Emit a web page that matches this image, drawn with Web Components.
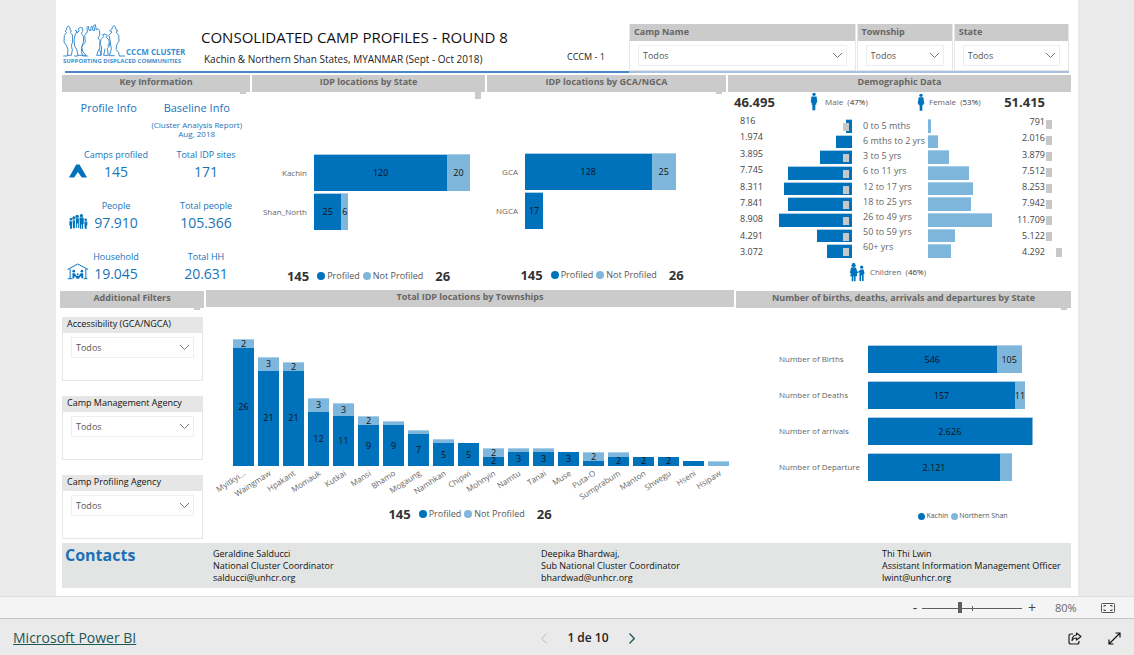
<!DOCTYPE html>
<html lang="en">
<head>
<meta charset="utf-8">
<title>Consolidated Camp Profiles</title>
<style>
  html, body { margin: 0; min-height: 100%; }
  body {
    font-family: "Open Sans", "Noto Sans", sans-serif;
    font-size: 10px; line-height: 12px; color: #222; background: #eaeaea;
    --dark: #0072bc; --light: #7fb6dc; --edge: #a9cfe8; --head: #cbcbcb; --ink: #666;
  }
</style>
</head>
<body>
<report-app></report-app>

<script>
const define = (name, html, setup) => {
  const tpl = document.createElement('template');
  tpl.innerHTML = html;
  customElements.define(name, class extends HTMLElement {
    constructor() {
      super();
      this.attachShadow({ mode: 'open' });
    }
    connectedCallback() {
      if (this.shadowRoot.childNodes.length) return;
      this.shadowRoot.append(tpl.content.cloneNode(true));
      if (setup) setup(this, this.shadowRoot);
    }
  });
};

/* Cluster logo: outlined group of people above the wordmark */
define('cluster-logo', `
<style>
  :host { display: block; color: #3d8fd1; font-weight: 600; white-space: nowrap; }
  .top { display: flex; align-items: flex-end; gap: 1px; }
  svg { width: 62px; height: 33px; display: block; }
  b { font-size: 8px; line-height: 10px; font-weight: 700; }
  p { margin: 0; font-size: 6px; line-height: 9px; font-weight: 700; }
</style>
<div class="top">
  <svg viewBox="21 74 186 99" fill="none" stroke="currentColor" stroke-width="3" stroke-linejoin="round" aria-hidden="true">
    <path d="M22 170H34L36 150L31 138L24 128L25 108L32 99L27 95L31 92Q32 80 37 80Q42 80 43 92L47 95L42 99L49 106L50 128L46 138L49 152L46 168H34"/>
    <path d="M54 170H66L63 152L56 140L54 122L58 104L63 98L57 92L62 95L64 101L69 94L67 88L73 84L80 86L80 96L76 102L83 112L82 130L77 144L81 158L90 168H66"/>
    <path d="M97 170H80L76 156L78 140L88 128L86 108L94 98L93 84L97 80L99 93L105 93L104 84L108 80L110 93L116 93L113 78L118 76L121 92L126 88L131 94L131 108L126 116L132 124L131 150L135 168H122L128 150"/>
    <path d="M135 168L137 142L132 134L135 120L143 112L140 106L147 104L154 108L151 114L159 122L160 140L154 148L157 168H143L147 148"/>
    <path d="M155 140L163 128L159 108L168 98L161 94L167 91Q169 79 174 79Q179 79 180 91L186 94L180 98L188 108L189 126L183 134L180 150L188 160L190 170H207M163 128L166 150L160 169H176"/>
  </svg><b>CCCM CLUSTER</b>
</div>
<p>SUPPORTING DISPLACED COMMUNITIES</p>`);

/* Titled drop-down filter */
define('slicer-box', `
<style>
  :host { display: flex; flex-direction: column; box-sizing: border-box; border: 1px solid #e6e6e6; border-top: 0; background: #fff; }
  label { background: var(--head); color: var(--ink); font-size: 9px; font-weight: 700; line-height: 16px; padding: 0 4px 1px; white-space: nowrap; }
  :host([plain]) label { background: #e6e6e6; color: #111; font-weight: 400; line-height: 14px; padding-bottom: 2px; }
  .box { display: grid; margin: 4px 8px; border: 1px solid #eee; align-items: center; }
  select, svg { grid-area: 1 / 1; }
  select { appearance: none; border: 0; background: none; margin: 0; padding: 0 4px; width: 100%; height: 19px; font: inherit; font-size: 9px; color: #555; }
  svg { justify-self: end; margin-right: 3px; pointer-events: none; width: 11px; height: 7px; }
</style>
<label for="s"></label>
<div class="box"><select id="s"><option>Todos</option></select>
<svg viewBox="0 0 11 7" fill="none" stroke="#777"><path d="M1 1L5.500 5.500L10 1"/></svg></div>`,
(el, root) => { root.querySelector('label').textContent = el.getAttribute('label'); });

define('report-header', `
<style>
  :host { display: grid; grid-template-columns: 138px minmax(0, 301fr) 64px minmax(0, 504fr); height: 47px; }
  :host { grid-template-columns: 138px minmax(0, 365fr) 64px minmax(0, 440fr) 2px; }
  .cell { border-bottom: 2px solid #4a86cb; min-width: 0; }
  .logo { margin-left: 3px; }
  cluster-logo { margin-left: -2px; }
  h1 { font-size: 15px; line-height: 20px; font-weight: 400; color: #111; margin: 3px 0 0 1px; white-space: nowrap; }
  h2 { font-size: 10px; line-height: 16px; font-weight: 400; color: #222; margin: 4px 0 0 4px; white-space: nowrap; }
  .code { padding: 26px 0 0 2px; box-sizing: border-box; font-size: 9px; color: #222; line-height: 14px; }
  .slicers { display: grid; grid-template-columns: 226fr 96fr 115fr; gap: 1px; border-bottom: 2px solid #a8c0e2; }
</style>
<div class="cell logo"><cluster-logo></cluster-logo></div>
<div class="cell"><h1>CONSOLIDATED CAMP PROFILES - ROUND 8</h1><h2>Kachin &amp; Northern Shan States, MYANMAR (Sept - Oct 2018)</h2></div>
<div class="cell code">CCCM - 1</div>
<div class="slicers">
  <slicer-box label="Camp Name"></slicer-box><slicer-box label="Township"></slicer-box><slicer-box label="State"></slicer-box>
</div>`);

/* Section with a grey title strip */
define('panel-card', `
<style>
  :host { display: flex; flex-direction: column; min-width: 0; }
  header { position: relative; background: var(--head); text-align: center; height: 17px; }
  h3 { margin: 0; font-size: 9px; line-height: 14px; font-weight: 700; color: #666; white-space: nowrap; }
  i { position: absolute; right: 4px; top: 100%; width: 6px; height: 2px; background: var(--head); }
  :host([mark=tall]) i { height: 7px; }
  :host(:not([mark])) i { display: none; }
</style>
<header><h3></h3><i></i></header><slot></slot>`,
(el, root) => { root.querySelector('h3').textContent = el.getAttribute('heading'); });

const ICONS = {
  tent: ['43 208 55 42', 18, 14, '<path d="M65 209H75L98 249H82L70 232L59 249H43Z"/>'],
  people: ['39 359 58 46', 19, 15, '<circle cx="45" cy="375" r="4"/><circle cx="54" cy="371" r="5"/><circle cx="64" cy="366" r="5"/><circle cx="77" cy="364" r="5"/><circle cx="90" cy="377" r="4"/><path d="M40 381H48V404H42V394H40ZM50 378H57V403H51ZM60 372H69V402H66V388H63V402H60ZM71 370H84V390H82V404H78V391H76V404H72ZM86 382H95V394H93V404H87Z"/>'],
  house: ['36 493 66 52', 22, 17, '<path d="M37 513L68 496L100 513M45 511V541M93 511V541M38 541H52M86 541H98" fill="none" stroke="currentColor" stroke-width="3"/><circle cx="56" cy="518" r="4"/><circle cx="68" cy="527" r="3"/><circle cx="81" cy="518" r="4"/><path d="M52 524H59L64 532H72L77 524H85V540H79V532L73 538V541H64V538L58 532V540H52Z"/>'],
  man: ['255 66 24 58', 8, 19, '<circle cx="267" cy="73" r="5"/><path d="M259 80H275L277 98H274V105H271V122H262V105H260V98H257Z"/>'],
  woman: ['578 64 24 54', 8, 18, '<circle cx="590" cy="71" r="5"/><path d="M583 77H597L600 96H597V101H594V117H586V101H583V96H580Z"/>'],
  children: ['370 575 52 62', 17, 20, '<path d="M378 585Q378 577 384 577Q390 577 390 585L393 588H388V591H380V588H375ZM376 592H391L396 606L405 600L404 598H415L418 612H415V634H410V617H407V634H402V606L394 611L395 619H390V635H385V619H383V635H378V619H373L376 610H372Z"/><circle cx="409" cy="591" r="5"/>']
};
define('glyph-icon', `<style>:host { display: block; color: var(--dark); line-height: 0; }</style><svg fill="currentColor" aria-hidden="true"></svg>`,
(el, root) => {
  const [box, w, h, shape] = ICONS[el.getAttribute('name')];
  const svg = root.querySelector('svg');
  svg.setAttribute('viewBox', box);
  svg.setAttribute('width', w);
  svg.setAttribute('height', h);
  svg.innerHTML = shape;
});

define('key-information', `
<style>
  :host { display: block; color: #1a73b9; white-space: nowrap; text-align: center; padding-top: 8px; }
  .heads { display: grid; grid-template-columns: 1fr 1fr; margin: 0 8px 0 4px; }
  h4 { margin: 0; font-size: 11px; line-height: 16px; font-weight: 400; }
  small { display: block; font-size: 8px; line-height: 9px; padding-top: 4px; }
  .stats { display: grid; grid-template-columns: 32px 44px minmax(0, 1fr); row-gap: 17px; padding-top: 10px; }
  .stats glyph-icon { align-self: end; justify-self: center; margin-bottom: 4px; }
  dl { margin: 0; display: flex; flex-direction: column; align-items: center; }
  dl.total { margin-left: 24px; }
  dt { font-size: 9px; line-height: 14px; }
  dd { margin: 0; font-size: 14px; line-height: 20px; }
</style>
<div class="heads"><h4>Profile Info</h4><div><h4>Baseline Info</h4><small>(Cluster Analysis Report)<br>Aug, 2018</small></div></div>
<div class="stats"></div>`,
(el, root) => {
  const rows = [
    ['tent', 'Camps profiled', '145', 'Total IDP sites', '171'],
    ['people', 'People', '97.910', 'Total people', '105.366'],
    ['house', 'Household', '19.045', 'Total HH', '20.631']
  ];
  root.querySelector('.stats').innerHTML = rows.map(([i, a, b, c, d]) =>
    `<glyph-icon name="${i}"></glyph-icon><dl><dt>${a}</dt><dd>${b}</dd></dl><dl class="total"><dt>${c}</dt><dd>${d}</dd></dl>`).join('');
});

/* Colour legend, optionally with totals on both sides */
define('chart-legend', `
<style>
  :host { display: flex; align-items: center; justify-content: center; font-size: 9px; line-height: 16px; color: #555; white-space: nowrap; }
  b { font-size: 13px; color: #333; }
  .before { margin-right: 8px; }
  .after { margin-left: 12px; }
  span { display: flex; align-items: center; gap: 2px; margin-right: 3px; }
  span:last-of-type { margin-right: 0; }
  i { width: 8px; height: 8px; border-radius: 50%; background: var(--dark); }
  span + span i { background: var(--light); }
  :host([small]) { font-size: 7px; }
  :host([small]) i { width: 7px; height: 7px; }
  :host([small]) span { gap: 1px; }
</style>`,
(el, root) => {
  const [a, b] = el.getAttribute('names').split('|');
  const t = (el.getAttribute('totals') || '').split('|');
  root.innerHTML += (t[0] ? `<b class="before">${t[0]}</b>` : '') + `<span><i></i>${a}</span><span><i></i>${b}</span>` + (t[1] ? `<b class="after">${t[1]}</b>` : '');
});

/* Stacked horizontal bars. Each row: label, first value, its width %, second value, its width % */
define('bar-chart', `
<style>
  :host { display: grid; grid-template-columns: var(--label) minmax(0, 1fr); row-gap: var(--gap); grid-auto-rows: var(--bar); align-items: stretch; color: var(--ink); font-size: 8px; }
  .label { display: flex; align-items: center; justify-content: var(--side, flex-end); padding-right: 7px; white-space: nowrap; }
  .bar { display: flex; }
  .bar span { box-sizing: border-box; border-top: 1px solid var(--edge); display: flex; align-items: center; justify-content: center; background: var(--light); color: #111; font-size: 9px; }
  .bar span:first-child { background: var(--dark); }
</style>`,
(el, root) => {
  root.innerHTML += el.getAttribute('rows').split(';').map(r => {
    const [label, a, wa, b, wb] = r.split(',');
    return `<div class="label">${label}</div><div class="bar"><span style="width:${wa}%">${a}</span><span style="width:${wb}%">${b}</span></div>`;
  }).join('');
});

define('population-pyramid', `
<style>
  :host { display: flex; flex-direction: column; color: var(--ink); white-space: nowrap; }
  .top { display: grid; grid-template-columns: 76px 107px minmax(0, 1fr) auto; align-items: center; height: 17px; padding: 0 26px 0 6px; }
  .top b { font-size: 13px; color: #333; }
  .who, .kids { display: flex; align-items: center; gap: 7px; font-size: 8px; }
  .who.near { gap: 4px; }
  em { font-style: normal; color: #333; }
  .plot { display: grid; grid-template-columns: 34px minmax(0, 90fr) 76px minmax(0, 80fr) 37px 26px; height: 149px; }
  ol { box-sizing: border-box; list-style: none; margin: 0; padding: 0; display: flex; flex-direction: column; justify-content: space-between; }
  .num { font-size: 9px; line-height: 12px; color: #444; }
  .left { padding: 6px 0 0 12px; }
  .right { padding: 7px 0 0; text-align: right; }
  .age { padding: 11px 0 5px 11px; font-size: 9px; line-height: 12px; }
  .bars { display: grid; grid-template-columns: minmax(0, 1fr); grid-auto-rows: minmax(0, 1fr); row-gap: 2px; padding-top: 10px; justify-content: stretch; }
  .bars li { position: relative; box-sizing: border-box; border-top: 1px solid var(--edge); }
  .male li { justify-self: end; background: var(--dark); }
  .female li { background: var(--light); }
  .male i { position: absolute; right: 3px; top: 3px; width: 6px; height: 8px; background: #c8c8c8; }
  .marks { padding: 11px 0 1px 1px; }
  .marks li { width: 6px; height: 9px; background: #c8c8c8; }
  .marks li:last-child { align-self: center; }
  .kids { justify-content: center; height: 28px; gap: 4px; padding-right: 24px; }
</style>
<div class="top"><b>46.495</b><span class="who"><glyph-icon name="man"></glyph-icon><span>Male &nbsp;(<em>47%</em>)</span></span>
<span class="who near"><glyph-icon name="woman"></glyph-icon><span>Female &nbsp;(<em>53%</em>)</span></span><b>51.415</b></div>
<div class="plot">
  <ol class="num left"></ol><ol class="bars male"></ol><ol class="age"></ol><ol class="bars female"></ol><ol class="num right"></ol><ol class="marks"></ol>
</div>
<div class="kids"><glyph-icon name="children"></glyph-icon><span>Children &nbsp;(<em>46%</em>)</span></div>`,
(el, root) => {
  const rows = [
    ['816', 7, '0 to 5 mths', 4, '791'], ['1.974', 18, '6 mths to 2 yrs', 13, '2.016'],
    ['3.895', 36, '3 to 5 yrs', 26, '3.879'], ['7.745', 71, '6 to 11 yrs', 51, '7.512'],
    ['8.311', 76, '12 to 17 yrs', 56, '8.253'], ['7.841', 71, '18 to 25 yrs', 54, '7.942'],
    ['8.908', 81, '26 to 49 yrs', 80, '11.709'], ['4.291', 39, '50 to 59 yrs', 34, '5.122'],
    ['3.072', 28, '60+ yrs', 29, '4.292']
  ];
  const fill = (sel, fn) => { root.querySelector(sel).innerHTML = rows.map(fn).join(''); };
  fill('.left', r => `<li>${r[0]}</li>`);
  fill('.male', (r, i) => `<li style="width:${r[1]}%">${i === 1 ? '' : '<i></i>'}</li>`);
  fill('.age', r => `<li>${r[2]}</li>`);
  fill('.female', r => `<li style="width:${r[3]}%"></li>`);
  fill('.right', r => `<li>${r[4]}</li>`);
  fill('.marks', () => '<li></li>');
});

define('township-chart', `
<style>
  :host { display: grid; grid-template-columns: repeat(20, minmax(0, 1fr)); column-gap: 4px; }
  .col { height: 127px; display: flex; flex-direction: column; justify-content: flex-end; font-size: 9px; line-height: 8px; color: #111; }
  .col span { box-sizing: border-box; display: flex; align-items: center; justify-content: center; background: var(--dark); flex: none; }
  .col span:first-child { background: var(--light); border-top: 1px solid var(--edge); }
  .name { display: flex; justify-content: flex-end; padding-top: 2px; height: 30px; font-size: 8px; line-height: 10px; color: var(--ink); white-space: nowrap; }
  .name span { transform: rotate(-33deg); transform-origin: 100% 0; margin-right: 12px; height: 10px; }
</style>`,
(el, root) => {
  const data = [['Myitkyi...', 26, 2], ['Waingmaw', 21, 3], ['Hpakant', 21, 2], ['Momauk', 12, 3], ['Kutkai', 11, 3],
    ['Mansi', 9, 2], ['Bhamo', 9, 1], ['Mogaung', 7, 1], ['Namhkan', 5, 1], ['Chipwi', 5, 0], ['Mohnyin', 2, 2],
    ['Namtu', 3, 1], ['Tanai', 3, 1], ['Muse', 3, 0], ['Puta-O', 1, 2], ['Sumprabum', 2, 1], ['Manton', 2, 0],
    ['Shwegu', 2, 0], ['Hseni', 1, 0], ['Hsipaw', 0, 1]];
  const part = n => n ? `height:${n / 28 * 100}%` : 'height:0;border:0';
  const text = n => n > 1 ? n : '';
  root.innerHTML += data.map(([, a, b]) => `<div class="col"><span style="${part(b)}">${text(b)}</span><span style="${part(a)}">${text(a)}</span></div>`).join('')
    + data.map(([n]) => `<div class="name"><span>${n}</span></div>`).join('');
});

define('contacts-band', `
<style>
  :host { display: grid; grid-template-columns: 148px 328fr 341fr 186fr; background: #e3e5e4; height: 45px; color: #111; padding: 0 3px; font-size: 9px; line-height: 12px; }
  h3 { margin: 0; font-size: 16px; line-height: 24px; color: #1a6fb8; font-weight: 700; }
  address { font-style: normal; padding-top: 5px; white-space: nowrap; }
</style>
<h3>Contacts</h3>
<address>Geraldine Salducci<br>National Cluster Coordinator<br>salducci@unhcr.org</address>
<address>Deepika Bhardwaj,<br>Sub National Cluster Coordinator<br>bhardwad@unhcr.org</address>
<address>Thi Thi Lwin<br>Assistant Information Management Officer<br>lwint@unhcr.org</address>`);

define('zoom-bar', `
<style>
  :host { display: flex; align-items: center; justify-content: flex-end; box-sizing: border-box; height: 23px; padding-right: 18px; background: #f4f4f4; border-top: 1px solid #dcdcdc; border-bottom: 1px solid #c6c6c6; color: #666; }
  button { border: 0; padding: 0; background: none; font: inherit; font-size: 14px; line-height: 16px; color: #444; width: 10px; }
  .fit { width: 16px; display: grid; place-items: center; }
  input { appearance: none; margin: 0 5px 0 2px; width: 100px; height: 12px; background: linear-gradient(#605e5c, #605e5c) 0 6px / 100% 1px no-repeat, linear-gradient(#605e5c, #605e5c) 50% 4px / 1px 5px no-repeat; }
  input::-webkit-slider-thumb { appearance: none; width: 4px; height: 11px; background: #605e5c; }
  output { font-size: 11px; margin: 0 21px 0 18px; width: 24px; white-space: nowrap; }
</style>
<button type="button" aria-label="Zoom out">-</button>
<input type="range" min="0" max="100" value="38" aria-label="Zoom">
<button type="button" aria-label="Zoom in">+</button>
<output>80%</output>
<button type="button" class="fit" aria-label="Fit to page"><svg width="14" height="10" viewBox="0 0 14 10" fill="none" stroke="#555"><rect x=".5" y=".5" width="13" height="9" rx="1"/><path d="M3 4V2.500H5M9 2.500H11V4M3 6V7.500H5M9 7.500H11V6"/></svg></button>`);

define('page-footer', `
<style>
  :host { display: grid; grid-template-columns: 1fr auto 1fr; align-items: center; height: 36px; padding: 2px 13px 0; box-sizing: border-box; background: #eaeaea; }
  a { font-size: 14px; line-height: 18px; color: #1d5757; justify-self: start; }
  nav { display: flex; align-items: center; gap: 20px; font-size: 12px; line-height: 18px; font-weight: 600; color: #222; margin-right: -42px; }
  button { border: 0; padding: 0; background: none; display: grid; place-items: center; }
  .tools { display: flex; gap: 26px; justify-self: end; }
  svg { fill: none; }
</style>
<a href="#">Microsoft Power BI</a>
<nav><button type="button" aria-label="Previous page"><svg width="6" height="11" stroke="#b8b8b8"><path d="M5.500 .5L.7 5.500L5.500 10.500"/></svg></button><span>1 de 10</span><button type="button" aria-label="Next page"><svg width="6" height="11" stroke="#1d5757" stroke-width="1.300"><path d="M.5 .5L5.300 5.500L.5 10.500"/></svg></button></nav>
<div class="tools">
  <button type="button" aria-label="Share"><svg width="14" height="13" viewBox="0 0 14 13" stroke="#222" stroke-width="1.200" stroke-linejoin="round"><path d="M5 2H3Q1 2 1 4V10Q1 12 3 12H9Q11 12 11 10V9M8.500 1L13 4.500L8.500 8V6Q5.500 5.800 4 8.500Q4.500 3.200 8.500 3Z"/></svg></button>
  <button type="button" aria-label="Full screen"><svg width="13" height="13" viewBox="0 0 13 13" stroke="#111" stroke-width="1.200"><path d="M1 12L12 1M7.500 1H12V5.500M1 7.500V12H5.500"/></svg></button>
</div>`);

define('report-app', `
<style>
  :host { display: flex; flex-direction: column; min-height: 100vh; }
  main { box-sizing: border-box; margin: 0 56px; flex: 1; background: #fff; padding: 24px 7px 8px 6px; }
  .row { display: grid; column-gap: 2px; }
  .one { grid-template-columns: 188fr 233fr 239fr 343fr; margin-top: 4px; height: 216px; }
  .two { grid-template-columns: 144fr 528fr 335fr; margin-left: -2px; height: 252px; }
  .two panel-card:nth-child(2) { margin-top: -1px; }
  .state { --label: 62px; --gap: 2px; --bar: 37px; margin-top: 62px; }
  .gca { --label: 38px; --gap: 2px; --bar: 37px; margin-top: 61px; }
  .one chart-legend { margin-top: 38px; }
  .one .shifted { margin-right: 9px; }
  .filters { display: grid; row-gap: 15px; padding: 9px 1px 0 2px; grid-auto-rows: 64px; }
  township-chart { margin: 32px 5px 0 27px; }
  .two chart-legend { margin-top: 8px; }
  .births { --label: 89px; --gap: 8px; --bar: 28px; --side: flex-start; margin: 37px 36px 0 43px; }
  .two .small { margin: 27px 0 0 119px; }
</style>
<main>
  <report-header></report-header>
  <div class="row one">
    <panel-card heading="Key Information" mark><key-information></key-information></panel-card>
    <panel-card heading="IDP locations by State" mark="tall">
      <bar-chart class="state" rows="Kachin,120,78,20,13;Shan_North,25,16,6,4"></bar-chart>
      <chart-legend totals="145|26" names="Profiled|Not Profiled"></chart-legend>
    </panel-card>
    <panel-card heading="IDP locations by GCA/NGCA" mark>
      <bar-chart class="gca" rows="GCA,128,63,25,12;NGCA,17,9,,0"></bar-chart>
      <chart-legend class="shifted" totals="145|26" names="Profiled|Not Profiled"></chart-legend>
    </panel-card>
    <panel-card heading="Demographic Data"><population-pyramid></population-pyramid></panel-card>
  </div>
  <div class="row two">
    <panel-card heading="Additional Filters" mark>
      <div class="filters"><slicer-box plain label="Accessibility (GCA/NGCA)"></slicer-box><slicer-box plain label="Camp Management Agency"></slicer-box><slicer-box plain label="Camp Profiling Agency"></slicer-box></div>
    </panel-card>
    <panel-card heading="Total IDP locations by Townships">
      <township-chart></township-chart>
      <chart-legend totals="145|26" names="Profiled|Not Profiled"></chart-legend>
    </panel-card>
    <panel-card heading="Number of births, deaths, arrivals and departures by State" mark>
      <bar-chart class="births" rows="Number of Births,546,77,105,15;Number of Deaths,157,88,11,6;Number of arrivals,2.626,98,,1;Number of Departure,2.121,79,,7"></bar-chart>
      <chart-legend small class="small" names="Kachin|Northern Shan"></chart-legend>
    </panel-card>
  </div>
  <contacts-band></contacts-band>
</main>
<zoom-bar></zoom-bar>
<page-footer></page-footer>`);
</script>
</body>
</html>
